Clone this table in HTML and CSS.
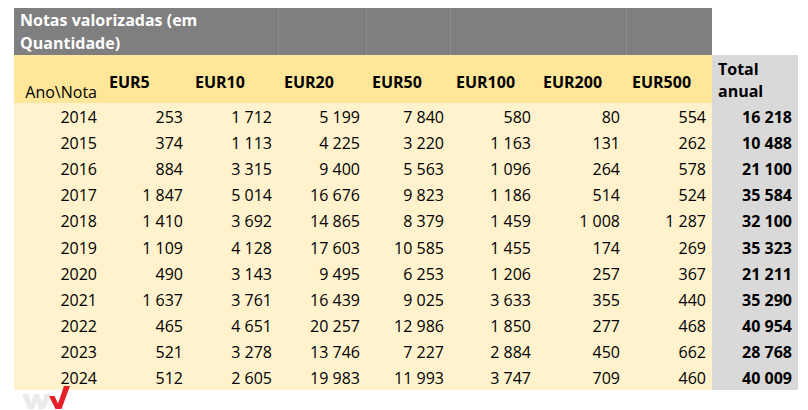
FILE: index.html
```html
<!DOCTYPE html>
<html lang="pt">
<head>
<meta charset="utf-8">
<title>Notas valorizadas</title>
<link rel="stylesheet" href="styles.css">
</head>
<body>
<div class="page">
  <table class="notes">
    <colgroup>
      <col class="c0"><col class="c1"><col class="c2"><col class="c3"><col class="c4"><col class="c5"><col class="c6"><col class="c7"><col class="c8">
    </colgroup>
    <thead>
      <tr class="title-row">
        <th colspan="3" class="title">Notas valorizadas (em Quantidade)</th>
        <th class="gap"></th>
        <th class="gap"></th>
        <th colspan="2" class="gap"></th>
        <th class="gap"></th>
        <th class="blank"></th>
      </tr>
      <tr class="head-row">
        <th class="corner">Ano\Nota</th>
        <th>EUR5</th>
        <th>EUR10</th>
        <th>EUR20</th>
        <th>EUR50</th>
        <th>EUR100</th>
        <th>EUR200</th>
        <th>EUR500</th>
        <th class="total-head">Total anual</th>
      </tr>
    </thead>
    <tbody>
      <tr><td>2014</td><td>253</td><td>1&nbsp;712</td><td>5&nbsp;199</td><td>7&nbsp;840</td><td>580</td><td>80</td><td>554</td><td class="total">16&nbsp;218</td></tr>
      <tr><td>2015</td><td>374</td><td>1&nbsp;113</td><td>4&nbsp;225</td><td>3&nbsp;220</td><td>1&nbsp;163</td><td>131</td><td>262</td><td class="total">10&nbsp;488</td></tr>
      <tr><td>2016</td><td>884</td><td>3&nbsp;315</td><td>9&nbsp;400</td><td>5&nbsp;563</td><td>1&nbsp;096</td><td>264</td><td>578</td><td class="total">21&nbsp;100</td></tr>
      <tr><td>2017</td><td>1&nbsp;847</td><td>5&nbsp;014</td><td>16&nbsp;676</td><td>9&nbsp;823</td><td>1&nbsp;186</td><td>514</td><td>524</td><td class="total">35&nbsp;584</td></tr>
      <tr><td>2018</td><td>1&nbsp;410</td><td>3&nbsp;692</td><td>14&nbsp;865</td><td>8&nbsp;379</td><td>1&nbsp;459</td><td>1&nbsp;008</td><td>1&nbsp;287</td><td class="total">32&nbsp;100</td></tr>
      <tr><td>2019</td><td>1&nbsp;109</td><td>4&nbsp;128</td><td>17&nbsp;603</td><td>10&nbsp;585</td><td>1&nbsp;455</td><td>174</td><td>269</td><td class="total">35&nbsp;323</td></tr>
      <tr><td>2020</td><td>490</td><td>3&nbsp;143</td><td>9&nbsp;495</td><td>6&nbsp;253</td><td>1&nbsp;206</td><td>257</td><td>367</td><td class="total">21&nbsp;211</td></tr>
      <tr><td>2021</td><td>1&nbsp;637</td><td>3&nbsp;761</td><td>16&nbsp;439</td><td>9&nbsp;025</td><td>3&nbsp;633</td><td>355</td><td>440</td><td class="total">35&nbsp;290</td></tr>
      <tr><td>2022</td><td>465</td><td>4&nbsp;651</td><td>20&nbsp;257</td><td>12&nbsp;986</td><td>1&nbsp;850</td><td>277</td><td>468</td><td class="total">40&nbsp;954</td></tr>
      <tr><td>2023</td><td>521</td><td>3&nbsp;278</td><td>13&nbsp;746</td><td>7&nbsp;227</td><td>2&nbsp;884</td><td>450</td><td>662</td><td class="total">28&nbsp;768</td></tr>
      <tr><td>2024</td><td>512</td><td>2&nbsp;605</td><td>19&nbsp;983</td><td>11&nbsp;993</td><td>3&nbsp;747</td><td>709</td><td>460</td><td class="total">40&nbsp;009</td></tr>
    </tbody>
  </table>
  <div class="logo">
    <svg width="50" height="26" viewBox="0 0 50 26" aria-hidden="true">
      <path d="M0 9 L6 9 L9 18 L12 9 L17 9 L20 18 L23 9 L29 9 L23 24 L17 24 L14.5 16.5 L12 24 L6 24 Z" fill="#ebebeb"/>
      <path d="M27 11 L32.5 11 L36 18.5 L42 1 L48 1 L39.5 24 L33.5 24 Z" fill="#e3202a"/>
    </svg>
  </div>
</div>
</body>
</html>
```

FILE: styles.css
```css
html, body {
  margin: 0;
  padding: 0;
  background: #ffffff;
}

.page {
  padding: 8px 0 0 14px;
  font-family: "Open Sans", Lato, "Liberation Sans", sans-serif;
  font-size: 16px;
  color: #000000;
}

.notes {
  border-collapse: collapse;
  table-layout: fixed;
  width: 784px;
}

.c0 { width: 89px; }
.c1 { width: 86px; }
.c2 { width: 89px; }
.c3 { width: 88px; }
.c4 { width: 84px; }
.c5 { width: 87px; }
.c6 { width: 89px; }
.c7 { width: 86px; }
.c8 { width: 86px; }

.notes th,
.notes td {
  padding: 0 6px;
  white-space: nowrap;
}

.title-row th {
  height: 47px;
  background: #7f7f7f;
  border-left: 1px solid #8e8e8e;
}

.title-row .title {
  border-left: none;
  color: #ffffff;
  font-weight: 700;
  text-align: left;
  white-space: normal;
  line-height: 23px;
  vertical-align: bottom;
}

.title-row .blank {
  background: #ffffff;
  border-left: none;
}

.head-row th {
  height: 42px;
  background: #ffe699;
  font-weight: 700;
  text-align: left;
  vertical-align: middle;
  padding-top: 5px;
  line-height: 22px;
}

.head-row .corner {
  font-weight: 400;
  text-align: right;
  vertical-align: bottom;
  padding-bottom: 1px;
  line-height: 20px;
}

.head-row .total-head {
  background: #d9d9d9;
  white-space: normal;
  line-height: 22px;
  vertical-align: bottom;
  padding-top: 0;
  padding-bottom: 1px;
}

.notes tbody td {
  height: 24.1px;
  background: #fff2cc;
  text-align: right;
  vertical-align: middle;
  line-height: 20px;
  padding-top: 2px;
  padding-bottom: 0;
}

.notes tbody td.total {
  background: #d9d9d9;
  font-weight: 700;
}

.logo {
  display: flex;
  padding-left: 8px;
  margin-top: -5px;
}
```
